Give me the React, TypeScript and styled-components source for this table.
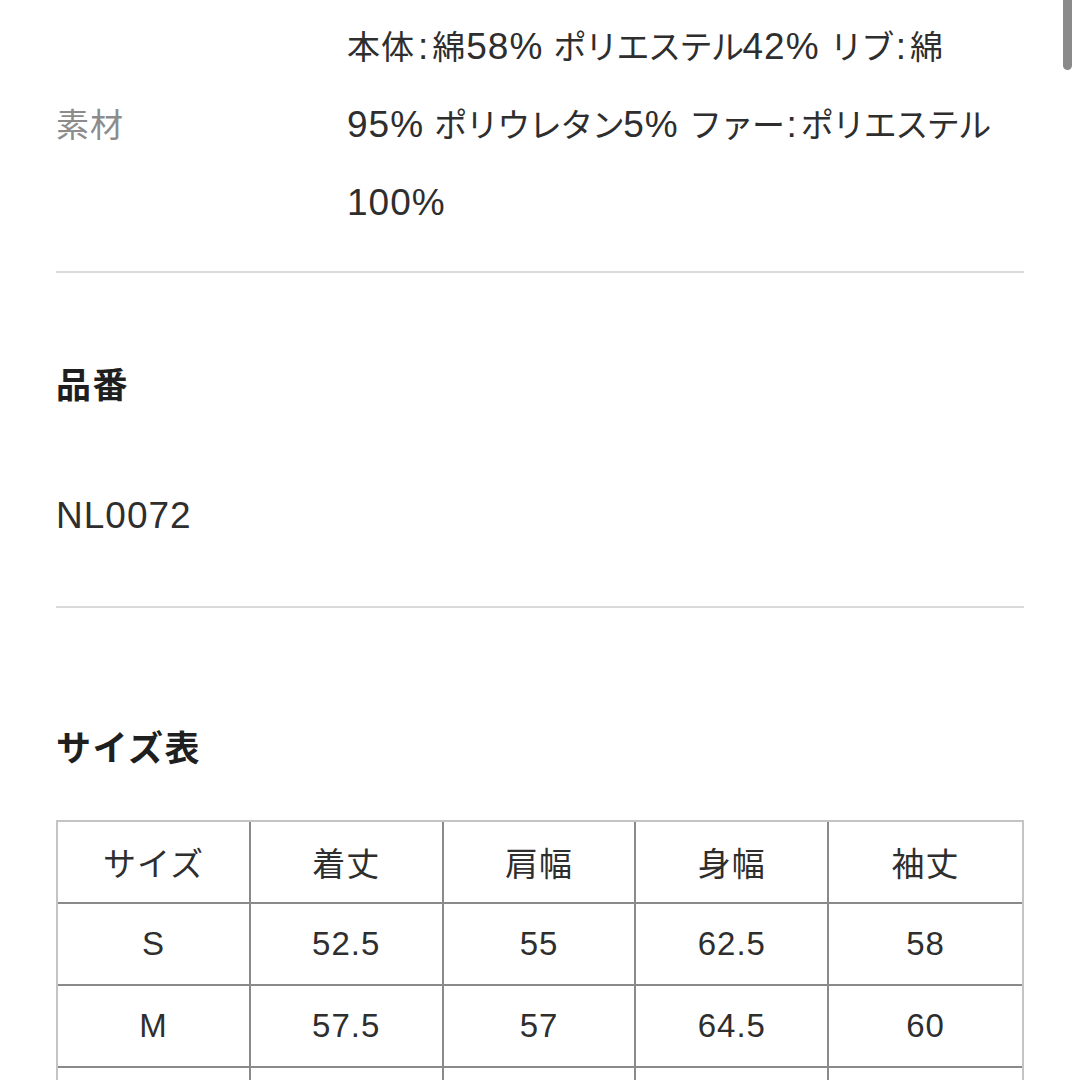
import React from "react";
import styled, { createGlobalStyle } from "styled-components";

const GlobalStyle = createGlobalStyle`
  html, body {
    margin: 0;
    padding: 0;
    background: #ffffff;
  }
  body {
    font-family: "Liberation Sans", "Noto Sans CJK JP", sans-serif;
    color: #333333;
    overflow: hidden;
  }
`;

const Page = styled.div`
  width: 1080px;
  height: 1080px;
  box-sizing: border-box;
  padding: 0 56px;
  overflow: hidden;
`;

const Scrollbar = styled.div`
  position: fixed;
  top: 0;
  right: 8px;
  width: 9px;
  height: 70px;
  border-radius: 0 0 5px 5px;
  background: #8a8a8a;
`;

const SpecRow = styled.div`
  display: flex;
  align-items: center;
  padding: 9px 0 28px;
  border-bottom: 2px solid #dadada;
`;

const SpecLabel = styled.div`
  width: 291px;
  flex-shrink: 0;
  font-size: 33px;
  letter-spacing: 1px;
  color: #8c8c8c;
  line-height: 48px;
`;

const SpecValue = styled.div`
  flex: 1;
  font-size: 33px;
  letter-spacing: 1px;
  line-height: 78px;
  color: #2e2e2e;
`;

const ValueLine = styled.span`
  display: block;
  height: 78px;
  white-space: nowrap;
`;

const LatinRun = styled.span`
  font-family: "Liberation Sans", sans-serif;
  font-size: 37px;
  line-height: 1;
  letter-spacing: 1px;
`;

const ColonRun = styled.span`
  font-family: "Liberation Sans", sans-serif;
  font-size: 37px;
  line-height: 1;
  margin: 0 3px;
`;

const KanaRun = styled.span`
  letter-spacing: -1.5px;
`;

const Section = styled.section<{ $divider?: boolean; $gap: number }>`
  padding-top: ${(p) => p.$gap}px;
  ${(p) => (p.$divider ? "padding-bottom: 65px; border-bottom: 2px solid #dadada;" : "")}
`;

const Heading = styled.h2`
  margin: 0;
  font-family: "Noto Sans CJK JP", sans-serif;
  font-weight: 700;
  font-size: 35px;
  line-height: 48px;
  height: 48px;
  letter-spacing: 1.5px;
  color: #1f1f1f;
`;

const BodyText = styled.p`
  margin: 86px 0 0;
  font-size: 33px;
  line-height: 48px;
  height: 48px;
  letter-spacing: 1px;
  color: #2e2e2e;
`;

const Table = styled.table`
  margin-top: 50px;
  width: 968px;
  table-layout: fixed;
  border-collapse: separate;
  border-spacing: 0;
  border-top: 2px solid #c4c4c4;
  border-left: 2px solid #c4c4c4;
  border-right: 2px solid #c4c4c4;
`;

const Cell = styled.td<{ $last?: boolean }>`
  height: 80px;
  padding: 0;
  text-align: center;
  vertical-align: middle;
  font-size: 33px;
  letter-spacing: 1px;
  color: #2e2e2e;
  border-bottom: 2px solid #8a8a8a;
  border-right: ${(p) => (p.$last ? "none" : "2px solid #8a8a8a")};
`;

type RunKind = "latin" | "colon" | "kana" | "other";

function kindOf(ch: string): RunKind {
  if (ch === ":") return "colon";
  if (/[0-9A-Za-z%.]/.test(ch)) return "latin";
  if (/[\u30A0-\u30FF]/.test(ch)) return "kana";
  return "other";
}

function renderRuns(text: string) {
  const runs: { kind: RunKind; text: string }[] = [];
  for (const ch of text) {
    const k = kindOf(ch);
    const last = runs[runs.length - 1];
    if (last && last.kind === k && k !== "colon") last.text += ch;
    else runs.push({ kind: k, text: ch });
  }
  return runs.map((r, i) => {
    if (r.kind === "latin") return <LatinRun key={i}>{r.text}</LatinRun>;
    if (r.kind === "colon") return <ColonRun key={i}>{r.text}</ColonRun>;
    if (r.kind === "kana") return <KanaRun key={i}>{r.text}</KanaRun>;
    return <React.Fragment key={i}>{r.text}</React.Fragment>;
  });
}

const materialLines = [
  "本体:綿58% ポリエステル42% リブ:綿",
  "95% ポリウレタン5% ファー:ポリエステル",
  "100%",
];

const headers = ["サイズ", "着丈", "肩幅", "身幅", "袖丈"];
const rows = [
  ["S", "52.5", "55", "62.5", "58"],
  ["M", "57.5", "57", "64.5", "60"],
  ["", "", "", "", ""],
];

export default function App() {
  return (
    <>
      <GlobalStyle />
      <Scrollbar />
      <Page>
        <SpecRow>
          <SpecLabel>素材</SpecLabel>
          <SpecValue>
            {materialLines.map((line) => (
              <ValueLine key={line}>{renderRuns(line)}</ValueLine>
            ))}
          </SpecValue>
        </SpecRow>

        <Section $divider $gap={86}>
          <Heading>品番</Heading>
          <BodyText>{renderRuns("NL0072")}</BodyText>
        </Section>

        <Section $gap={114}>
          <Heading>サイズ表</Heading>
          <Table>
            <tbody>
              <tr>
                {headers.map((h, i) => (
                  <Cell key={h} $last={i === headers.length - 1}>
                    {h}
                  </Cell>
                ))}
              </tr>
              {rows.map((r, ri) => (
                <tr key={ri}>
                  {r.map((v, i) => (
                    <Cell key={i} $last={i === r.length - 1}>
                      {v}
                    </Cell>
                  ))}
                </tr>
              ))}
            </tbody>
          </Table>
        </Section>
      </Page>
    </>
  );
}
